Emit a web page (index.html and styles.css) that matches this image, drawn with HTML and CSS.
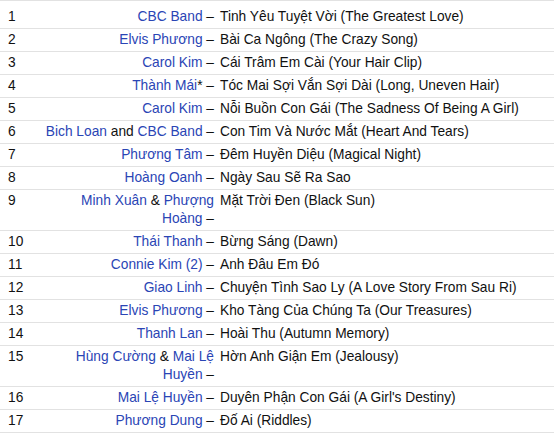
FILE: index.html
```html
<!DOCTYPE html>
<html>
<head>
<meta charset="utf-8">
<link rel="stylesheet" href="styles.css">
</head>
<body>
<table class="tracklist">
  <colgroup><col class="c-num"><col class="c-artist"><col class="c-title"></colgroup>
  <tbody>
    <tr class="first"><td class="num">1</td><td class="artist"><a>CBC Band</a>&nbsp;–</td><td class="title">Tinh Yêu Tuyệt Vời (The Greatest Love)</td></tr>
    <tr><td class="num">2</td><td class="artist"><a>Elvis Phương</a>&nbsp;–</td><td class="title">Bài Ca Ngông (The Crazy Song)</td></tr>
    <tr><td class="num">3</td><td class="artist"><a>Carol Kim</a>&nbsp;–</td><td class="title">Cái Trâm Em Cài (Your Hair Clip)</td></tr>
    <tr><td class="num">4</td><td class="artist"><a>Thành Mái</a>*&nbsp;–</td><td class="title">Tóc Mai Sợi Vắn Sợi Dài (Long, Uneven Hair)</td></tr>
    <tr><td class="num">5</td><td class="artist"><a>Carol Kim</a>&nbsp;–</td><td class="title">Nỗi Buồn Con Gái (The Sadness Of Being A Girl)</td></tr>
    <tr><td class="num">6</td><td class="artist"><a>Bich Loan</a> and <a>CBC Band</a>&nbsp;–</td><td class="title">Con Tim Và Nước Mắt (Heart And Tears)</td></tr>
    <tr><td class="num">7</td><td class="artist"><a>Phương Tâm</a>&nbsp;–</td><td class="title">Đêm Huyền Diệu (Magical Night)</td></tr>
    <tr><td class="num">8</td><td class="artist"><a>Hoàng Oanh</a>&nbsp;–</td><td class="title">Ngày Sau Sẽ Ra Sao</td></tr>
    <tr><td class="num">9</td><td class="artist"><a>Minh Xuân</a> &amp; <a>Phượng</a> <a>Hoàng</a>&nbsp;–</td><td class="title">Mặt Trời Đen (Black Sun)</td></tr>
    <tr><td class="num">10</td><td class="artist"><a>Thái Thanh</a>&nbsp;–</td><td class="title">Bừng Sáng (Dawn)</td></tr>
    <tr><td class="num">11</td><td class="artist"><a>Connie Kim (2)</a>&nbsp;–</td><td class="title">Anh Đâu Em Đó</td></tr>
    <tr><td class="num">12</td><td class="artist"><a>Giao Linh</a>&nbsp;–</td><td class="title">Chuyện Tình Sao Ly (A Love Story From Sau Ri)</td></tr>
    <tr><td class="num">13</td><td class="artist"><a>Elvis Phương</a>&nbsp;–</td><td class="title">Kho Tàng Của Chúng Ta (Our Treasures)</td></tr>
    <tr><td class="num">14</td><td class="artist"><a>Thanh Lan</a>&nbsp;–</td><td class="title">Hoài Thu (Autumn Memory)</td></tr>
    <tr><td class="num">15</td><td class="artist"><a>Hùng Cường</a> &amp; <a>Mai Lệ</a> <a>Huyền</a>&nbsp;–</td><td class="title">Hờn Anh Giận Em (Jealousy)</td></tr>
    <tr><td class="num">16</td><td class="artist"><a>Mai Lệ Huyền</a>&nbsp;–</td><td class="title">Duyên Phận Con Gái (A Girl's Destiny)</td></tr>
    <tr><td class="num">17</td><td class="artist"><a>Phương Dung</a>&nbsp;–</td><td class="title">Đố Ai (Riddles)</td></tr>
  </tbody>
</table>
</body>
</html>
```
FILE: styles.css
```css
html, body {
  margin: 0;
  padding: 0;
  background: #fff;
}
body {
  font-family: "Liberation Sans", Arial, Helvetica, sans-serif;
  font-size: 13.75px;
  line-height: 18px;
  color: #111;
}
.tracklist {
  width: 100%;
  border-collapse: collapse;
  table-layout: fixed;
}
.c-num { width: 40px; }
.c-artist { width: 179px; }
.tracklist tr {
  border-top: 1px solid #e2e2e2;
}
.tracklist tr:last-child {
  border-bottom: 1px solid #e2e2e2;
}
.tracklist td {
  padding: 2px 0;
  vertical-align: top;
}
.tracklist tr.first td {
  padding-top: 7px;
}
.num {
  padding-left: 8px !important;
}
.artist {
  text-align: right;
  padding-right: 5px !important;
  padding-left: 2px !important;
}
.artist a {
  color: #2a45b5;
  text-decoration: none;
}
.title {
  padding-left: 1px !important;
}
```
